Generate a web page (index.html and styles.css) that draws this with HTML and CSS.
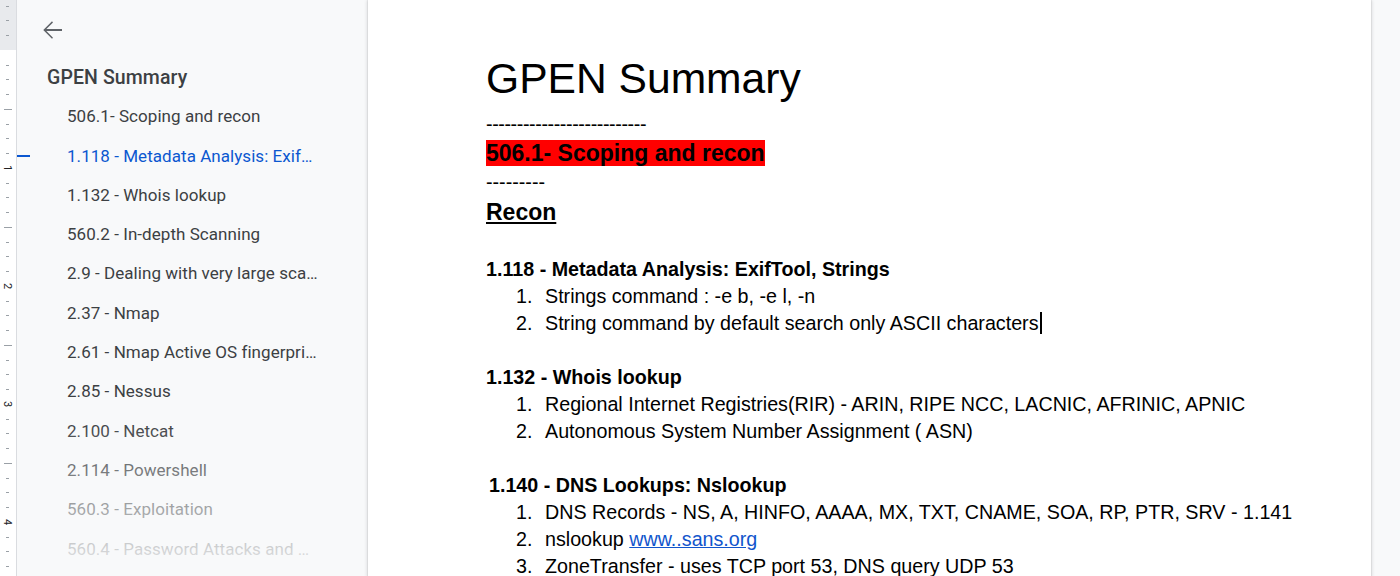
FILE: index.html
```html
<!DOCTYPE html>
<html lang="en">
<head>
<meta charset="utf-8">
<title>GPEN Summary</title>
<link rel="stylesheet" href="styles.css">
</head>
<body>
<div class="app">
  <div class="ruler">
    <svg width="16" height="576" viewBox="0 0 16 576">
      <rect x="0" y="0" width="16" height="50" fill="#e8eaed"/>
      <g fill="#9aa0a6">
        <rect x="6" y="6" width="3" height="1"/>
        <rect x="6" y="20" width="3" height="1"/>
        <rect x="6" y="35" width="3" height="1"/>
        <rect x="6" y="65" width="3" height="1"/>
        <rect x="6" y="79" width="3" height="1"/>
        <rect x="6" y="94" width="3" height="1"/>
        <rect x="4" y="109" width="8" height="1"/>
        <rect x="6" y="124" width="3" height="1"/>
        <rect x="6" y="138" width="3" height="1"/>
        <rect x="6" y="153" width="3" height="1"/>
        <rect x="6" y="183" width="3" height="1"/>
        <rect x="6" y="197" width="3" height="1"/>
        <rect x="6" y="212" width="3" height="1"/>
        <rect x="4" y="227" width="8" height="1"/>
        <rect x="6" y="242" width="3" height="1"/>
        <rect x="6" y="256" width="3" height="1"/>
        <rect x="6" y="271" width="3" height="1"/>
        <rect x="6" y="301" width="3" height="1"/>
        <rect x="6" y="315" width="3" height="1"/>
        <rect x="6" y="330" width="3" height="1"/>
        <rect x="4" y="345" width="8" height="1"/>
        <rect x="6" y="360" width="3" height="1"/>
        <rect x="6" y="374" width="3" height="1"/>
        <rect x="6" y="389" width="3" height="1"/>
        <rect x="6" y="419" width="3" height="1"/>
        <rect x="6" y="433" width="3" height="1"/>
        <rect x="6" y="448" width="3" height="1"/>
        <rect x="4" y="463" width="8" height="1"/>
        <rect x="6" y="478" width="3" height="1"/>
        <rect x="6" y="492" width="3" height="1"/>
        <rect x="6" y="507" width="3" height="1"/>
        <rect x="6" y="537" width="3" height="1"/>
        <rect x="6" y="551" width="3" height="1"/>
        <rect x="6" y="566" width="3" height="1"/>
      </g>
      <g class="ruler-num" fill="#202124" font-size="11" text-anchor="middle">
        <text transform="translate(7.5,168) rotate(90)" dy="4">1</text>
        <text transform="translate(7.5,286) rotate(90)" dy="4">2</text>
        <text transform="translate(7.5,404) rotate(90)" dy="4">3</text>
        <text transform="translate(7.5,522) rotate(90)" dy="4">4</text>
      </g>
    </svg>
  </div>

  <aside class="outline">
    <div class="back">
      <svg width="30" height="30" viewBox="0 0 24 24"><path fill="#5f6368" d="M20 11.2H7.5l5.3-5.3L12 5l-7 7 7 7 .8-.9-5.3-5.3H20z"/></svg>
    </div>
    <div class="doc-title">GPEN Summary</div>
    <ul class="items">
      <li>506.1- Scoping and recon</li>
      <li class="active">1.118 - Metadata Analysis: ExifTool, Strings</li>
      <li>1.132 - Whois lookup</li>
      <li>560.2 - In-depth Scanning</li>
      <li>2.9 - Dealing with very large scans</li>
      <li>2.37 - Nmap</li>
      <li>2.61 - Nmap Active OS fingerprinting</li>
      <li>2.85 - Nessus</li>
      <li>2.100 - Netcat</li>
      <li>2.114 - Powershell</li>
      <li>560.3 - Exploitation</li>
      <li>560.4 - Password Attacks and Merciless Pivoting</li>
    </ul>
    <div class="fade"></div>
  </aside>

  <main class="page">
    <h1 class="title">GPEN Summary</h1>
    <p class="line dashes">--------------------------</p>
    <h2 class="hd red"><span class="hl">506.1- Scoping and recon</span></h2>
    <p class="line">---------</p>
    <h2 class="hd recon"><span class="u">Recon</span></h2>
    <p class="line"></p>

    <p class="line b">1.118 - Metadata Analysis: ExifTool, Strings</p>
    <ol class="list">
      <li><span class="num">1.</span><span>Strings command : -e b, -e l, -n</span></li>
      <li><span class="num">2.</span><span>String command by default search only ASCII characters<span class="cursor"></span></span></li>
    </ol>
    <p class="line"></p>

    <p class="line b">1.132 - Whois lookup</p>
    <ol class="list">
      <li><span class="num">1.</span><span>Regional Internet Registries(RIR) - ARIN, RIPE NCC, LACNIC, AFRINIC, APNIC</span></li>
      <li><span class="num">2.</span><span>Autonomous System Number Assignment ( ASN)</span></li>
    </ol>
    <p class="line"></p>

    <p class="line b indent">1.140 - DNS Lookups: Nslookup</p>
    <ol class="list">
      <li><span class="num">1.</span><span>DNS Records - NS, A, HINFO, AAAA, MX, TXT, CNAME, SOA, RP, PTR, SRV - 1.141</span></li>
      <li><span class="num">2.</span><span>nslookup <a class="link" href="#">www..sans.org</a></span></li>
      <li><span class="num">3.</span><span>ZoneTransfer - uses TCP port 53, DNS query UDP 53</span></li>
    </ol>
  </main>

  <div class="gutter"></div>
</div>
</body>
</html>
```

FILE: styles.css
```css
* { box-sizing: border-box; }

html, body {
  margin: 0;
  padding: 0;
}

body {
  width: 1400px;
  height: 576px;
  overflow: hidden;
  background: #f8f9fa;
  font-family: "Liberation Sans", Arial, sans-serif;
}

.app {
  display: flex;
  height: 576px;
}

/* ---------- vertical ruler ---------- */
.ruler {
  flex: none;
  width: 17px;
  height: 576px;
  background: #fff;
  border-right: 1px solid #dadce0;
}
.ruler svg { display: block; }
.ruler-num { font-family: Roboto, "Liberation Sans", sans-serif; }

/* ---------- outline sidebar ---------- */
.outline {
  flex: none;
  width: 351px;
  height: 576px;
  position: relative;
  background: #f8f9fa;
  font-family: Roboto, "Liberation Sans", sans-serif;
  color: #3c4043;
  overflow: hidden;
}

.back {
  height: 58px;
  padding: 15px 0 0 20px;
}
.back svg { display: block; }

.doc-title {
  height: 39.3px;
  line-height: 39.3px;
  padding-left: 30px;
  font-size: 19.5px;
  font-weight: 500;
  letter-spacing: 0.1px;
}

.items {
  list-style: none;
  margin: 0;
  padding: 0;
}
.items li {
  position: relative;
  width: 302px;
  height: 39.3px;
  line-height: 39.3px;
  padding-left: 50px;
  font-size: 17px;
  letter-spacing: 0.05px;
  white-space: nowrap;
  overflow: hidden;
  text-overflow: ellipsis;
}
.items li.active { color: #0b57d0; }
.items li.active::before {
  content: "";
  position: absolute;
  left: 0;
  top: 18px;
  width: 13px;
  height: 2px;
  background: #0b57d0;
}

.fade {
  position: absolute;
  left: 0;
  right: 0;
  top: 418px;
  bottom: 0;
  background: linear-gradient(to bottom, rgba(248,249,250,0) 0%, rgba(248,249,250,0.95) 100%);
  pointer-events: none;
}

/* ---------- document page ---------- */
.page {
  flex: none;
  width: 1003px;
  height: 576px;
  background: #fff;
  box-shadow: 0 0 0 1px rgba(60,64,67,0.06), 0 1px 3px 1px rgba(60,64,67,0.16);
  padding-left: 118px;
  color: #000;
  position: relative;
  z-index: 1;
  overflow: hidden;
}

.gutter {
  flex: 1;
  background: #f8f9fa;
}

.title {
  margin: 53px 0 8px;
  font-size: 42.6px;
  font-weight: 400;
  line-height: 50px;
  height: 50px;
}

.line {
  margin: 0;
  font-size: 19.7px;
  line-height: 27px;
  height: 27px;
  white-space: nowrap;
}
.line.dashes { letter-spacing: -0.4px; }
.line.b { font-weight: 700; }
.line.indent { padding-left: 3px; }

.hd {
  margin: 0;
  font-size: 23px;
  font-weight: 700;
  line-height: 31px;
  height: 31px;
  white-space: nowrap;
}
.hd.recon {
  line-height: 33px;
  height: 33px;
}
.hl { background: #ff0000; }
.u { text-decoration: underline; text-underline-offset: 2px; }

.list {
  list-style: none;
  margin: 0;
  padding: 0 0 0 30px;
}
.list li {
  display: flex;
  font-size: 19.7px;
  line-height: 27px;
  height: 27px;
  white-space: nowrap;
}
.num {
  flex: none;
  width: 29px;
}

.link {
  color: #1155cc;
  text-decoration: underline;
}

.cursor {
  display: inline-block;
  width: 2px;
  height: 22px;
  margin-left: 1px;
  vertical-align: -4px;
  background: #000;
}
```
